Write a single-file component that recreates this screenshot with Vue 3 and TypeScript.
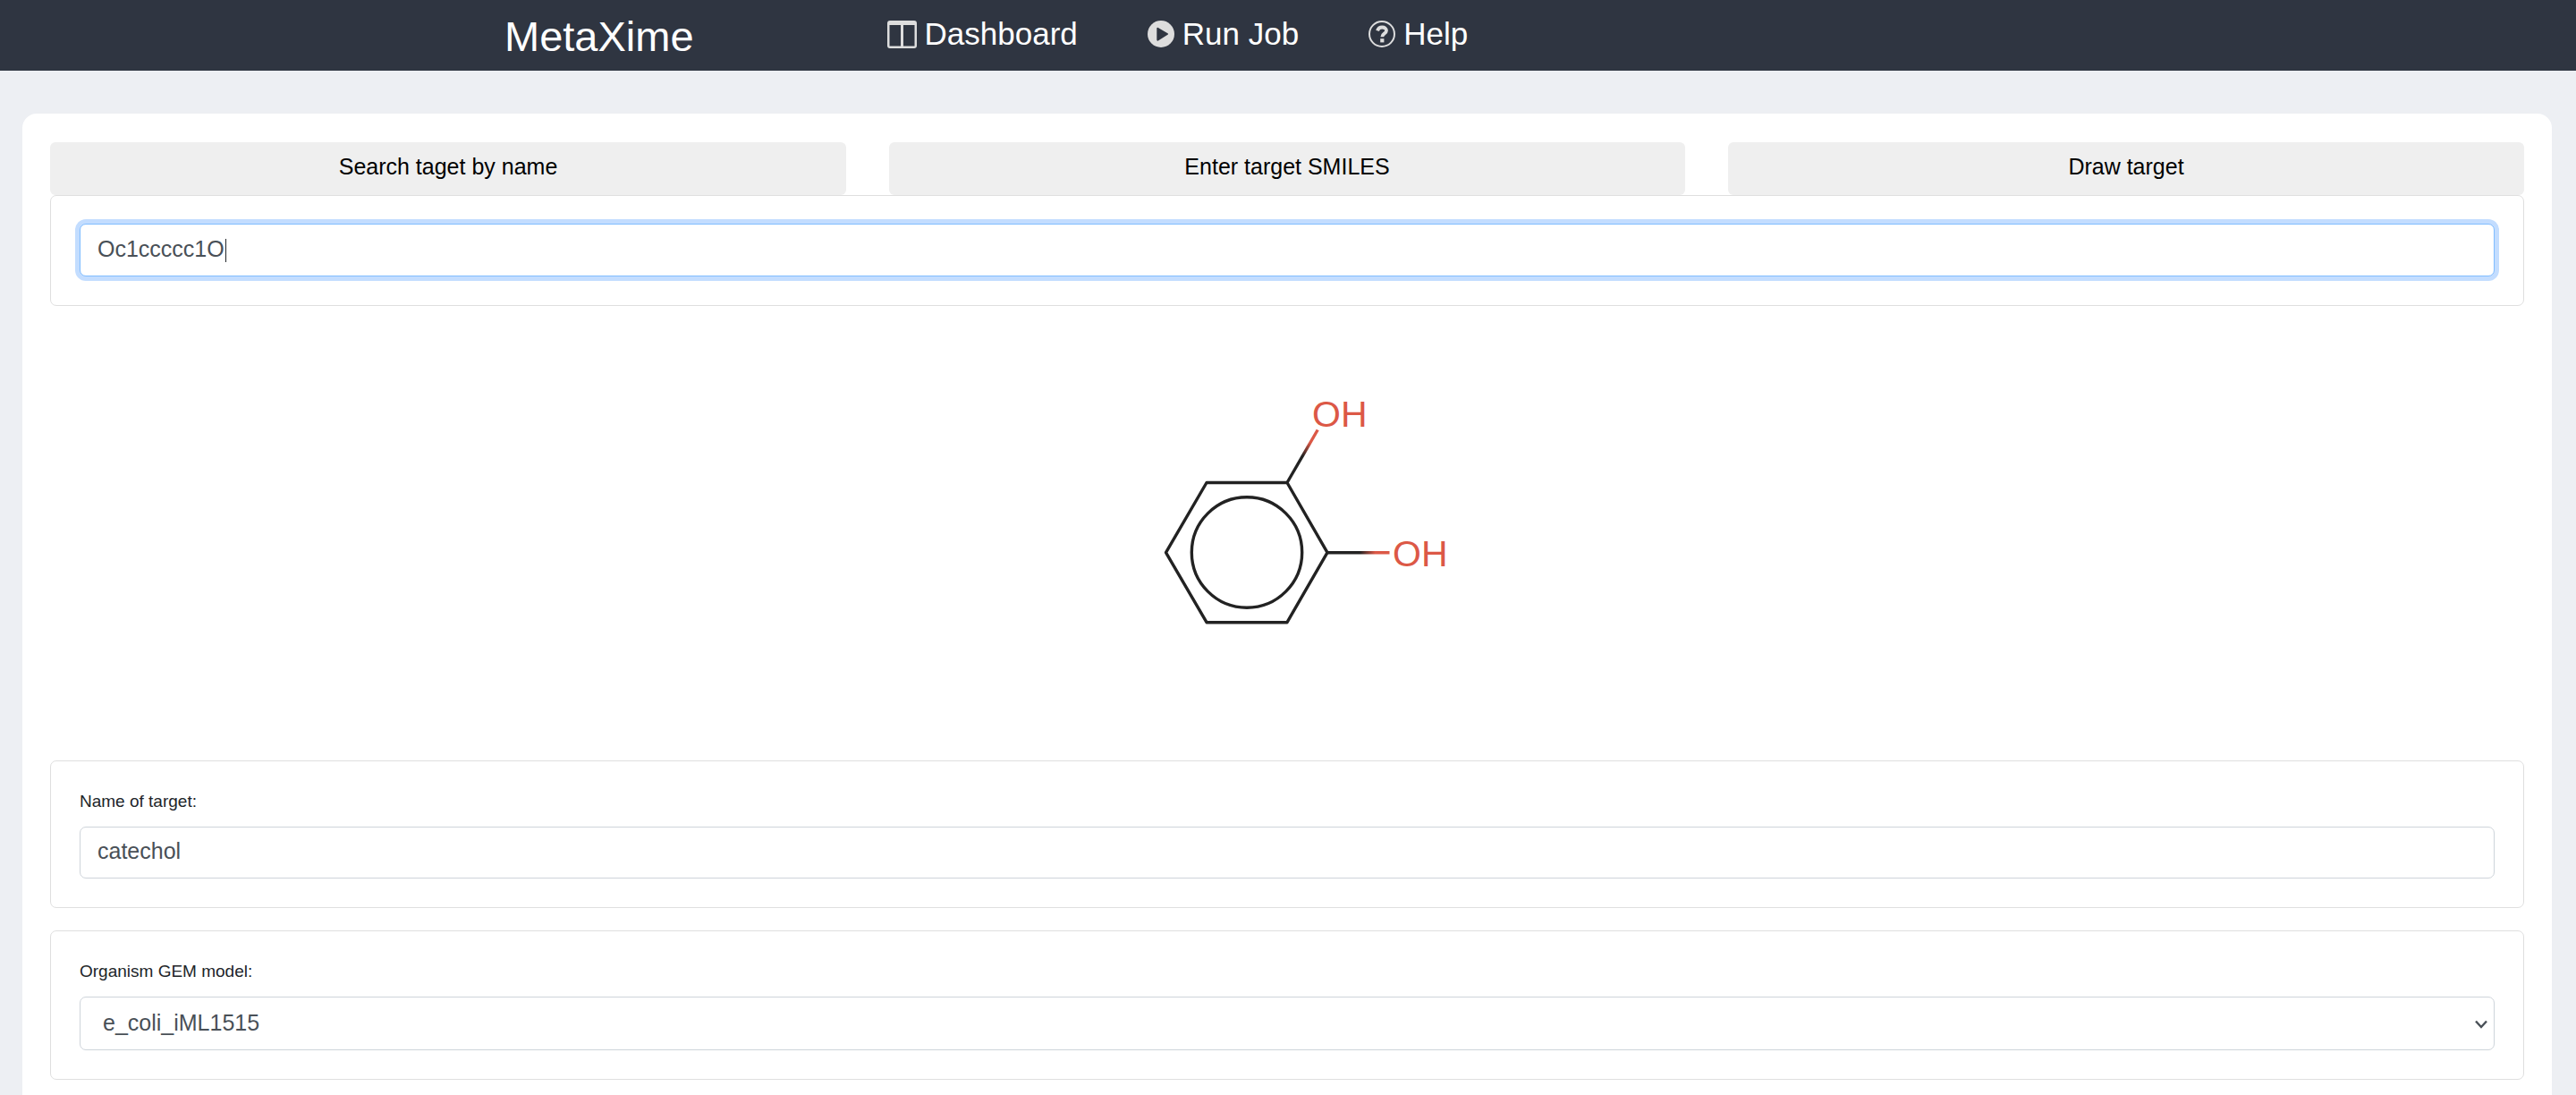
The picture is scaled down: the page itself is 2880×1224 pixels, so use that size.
<script setup lang="ts">
import { ref } from 'vue'

const tabs: string[] = ['Search taget by name', 'Enter target SMILES', 'Draw target']
const activeTab = ref(1)
const smiles = ref('Oc1ccccc1O')
const targetName = ref('catechol')
const model = ref('e_coli_iML1515')
</script>

<template>
  <div class="page">
    <header class="navbar">
      <a class="brand" href="#">MetaXime</a>
      <nav class="links">
        <a class="link" href="#dashboard">
          <svg class="icon" width="33" height="31" viewBox="0 0 33 31" aria-hidden="true">
            <path
              fill="#ddd"
              fill-rule="evenodd"
              d="M3 0H30A3 3 0 0 1 33 3V28A3 3 0 0 1 30 31H3A3 3 0 0 1 0 28V3A3 3 0 0 1 3 0ZM2.500 5V28.500H15V5ZM18 5V28.500H30.500V5Z"
            />
          </svg>
          <span>Dashboard</span>
        </a>
        <a class="link" href="#run">
          <svg class="icon" width="30" height="30" viewBox="0 0 30 30" aria-hidden="true">
            <circle cx="15" cy="15" r="15" fill="#ddd" />
            <path
              d="M11.300 8.800L22 15L11.300 21.600Z"
              fill="#2f3541"
              stroke="#2f3541"
              stroke-width="2"
              stroke-linejoin="round"
            />
          </svg>
          <span>Run Job</span>
        </a>
        <a class="link" href="#help">
          <svg class="icon" width="30" height="30" viewBox="0 0 30 30" aria-hidden="true">
            <circle cx="15" cy="15" r="14" fill="none" stroke="#ddd" stroke-width="2" />
            <path
              d="M10 11.300C10.800 8.800 12.700 7.500 15.200 7.500C18 7.500 20 9 20 11.300C20 14.500 15.300 14.300 15.300 18.300"
              fill="none"
              stroke="#ddd"
              stroke-width="3.800"
            />
            <rect x="13.200" y="20.200" width="4.200" height="4.200" fill="#ddd" />
          </svg>
          <span>Help</span>
        </a>
      </nav>
    </header>

    <main class="card">
      <div class="tabs">
        <button
          v-for="(tab, i) in tabs"
          :key="tab"
          type="button"
          class="tab"
          :aria-pressed="activeTab === i"
          @click="activeTab = i"
        >
          {{ tab }}
        </button>
      </div>

      <section class="panel">
        <div class="field">
          <input v-model="smiles" class="control focused" type="text" aria-label="Target SMILES" />
          <span class="caret" aria-hidden="true"></span>
        </div>
      </section>

      <div class="drawing">
        <svg width="508" height="508" viewBox="0 0 508 508" role="img" aria-label="catechol structure">
          <defs>
            <linearGradient id="bond-up" gradientUnits="userSpaceOnUse" x1="254" y1="197.500" x2="288.500" y2="138">
              <stop offset="0.500" stop-color="#222" />
              <stop offset="0.750" stop-color="#dc5846" />
            </linearGradient>
            <linearGradient id="bond-right" gradientUnits="userSpaceOnUse" x1="299" y1="276" x2="368.500" y2="276">
              <stop offset="0.520" stop-color="#222" />
              <stop offset="0.770" stop-color="#dc5846" />
            </linearGradient>
          </defs>
          <g fill="none" stroke="#222" stroke-width="3.400" stroke-linecap="round" stroke-linejoin="round">
            <path d="M118.500 275.700L164 197.500H254L299 275.700L254 353.700H164Z" />
            <circle cx="209" cy="275.500" r="61.700" />
            <path d="M254 197.500L288.200 138.500" stroke="url(#bond-up)" stroke-linecap="butt" />
            <path d="M299 274H368.500V277.400H299Z" fill="url(#bond-right)" stroke="none" />
          </g>
          <g class="atom">
            <text x="282" y="135">OH</text>
            <text x="372" y="291">OH</text>
          </g>
        </svg>
      </div>

      <section class="panel">
        <label class="label" for="target-name">Name of target:</label>
        <input id="target-name" v-model="targetName" class="control" type="text" />
      </section>

      <section class="panel spaced">
        <label class="label" for="gem-model">Organism GEM model:</label>
        <div class="field">
          <select id="gem-model" v-model="model" class="control select">
            <option value="e_coli_iML1515">e_coli_iML1515</option>
          </select>
          <svg class="chevron" width="14" height="10" viewBox="0 0 14 10" aria-hidden="true">
            <path d="M1 1.500L7 8L13 1.500" fill="none" stroke="#495057" stroke-width="2.400" />
          </svg>
        </div>
      </section>
    </main>
  </div>
</template>

<style>
body {
  margin: 0;
  background: #edeff3;
}
</style>

<style scoped>
.page {
  display: flex;
  flex-direction: column;
  min-height: 100vh;
  font-family: 'Liberation Sans', Arial, sans-serif;
  color: #212529;
}

.page,
.page * {
  box-sizing: border-box;
}

.navbar {
  display: flex;
  align-items: flex-start;
  gap: 216px;
  height: 79px;
  padding-left: 564px;
  background: #2f3541;
}

.brand {
  font-size: 47px;
  line-height: 81px;
  color: #fff;
  text-decoration: none;
}

.links {
  display: flex;
  gap: 78px;
}

.link {
  display: flex;
  align-items: center;
  gap: 9px;
  font-size: 35px;
  line-height: 76px;
  color: #fff;
  text-decoration: none;
}

.icon {
  flex: none;
}

.card {
  flex: 1;
  margin: 48px 27px 0 25px;
  padding: 32px 31px 17px;
  border-radius: 16px 16px 0 0;
  background: #fff;
}

.tabs {
  display: grid;
  grid-template-columns: repeat(3, 1fr);
  gap: 48px;
}

.tab {
  height: 59px;
  padding: 0 0 5px;
  border: 0;
  border-radius: 6px;
  background: #efefef;
  color: #000;
  font-family: inherit;
  font-size: 25px;
}

.panel {
  padding: 31px 32px 32px;
  border: 1px solid #dfdfdf;
  border-radius: 7px;
}

.spaced {
  margin-top: 25px;
}

.label {
  display: block;
  margin-bottom: 15px;
  font-size: 19px;
  line-height: 27px;
}

.field {
  position: relative;
}

.control {
  display: block;
  width: 100%;
  height: 58px;
  padding: 0 19px 3px;
  border: 1px solid #ced4da;
  border-radius: 7px;
  outline: 0;
  background: #fff;
  color: #495057;
  font-family: inherit;
  font-size: 25px;
}

.focused {
  height: 59px;
  border-color: #80bdff;
  box-shadow: 0 0 0 5px #c3ddff;
  caret-color: transparent;
}

.caret {
  position: absolute;
  left: 163px;
  top: 17px;
  width: 1px;
  height: 26px;
  background: #212529;
}

.select {
  height: 60px;
  padding-left: 25px;
  appearance: none;
}

.chevron {
  position: absolute;
  right: 8px;
  top: 26px;
  pointer-events: none;
}

.drawing {
  display: flex;
  justify-content: center;
}

.drawing svg {
  display: block;
}

.atom {
  fill: #dc5846;
  font-size: 41px;
}
</style>
